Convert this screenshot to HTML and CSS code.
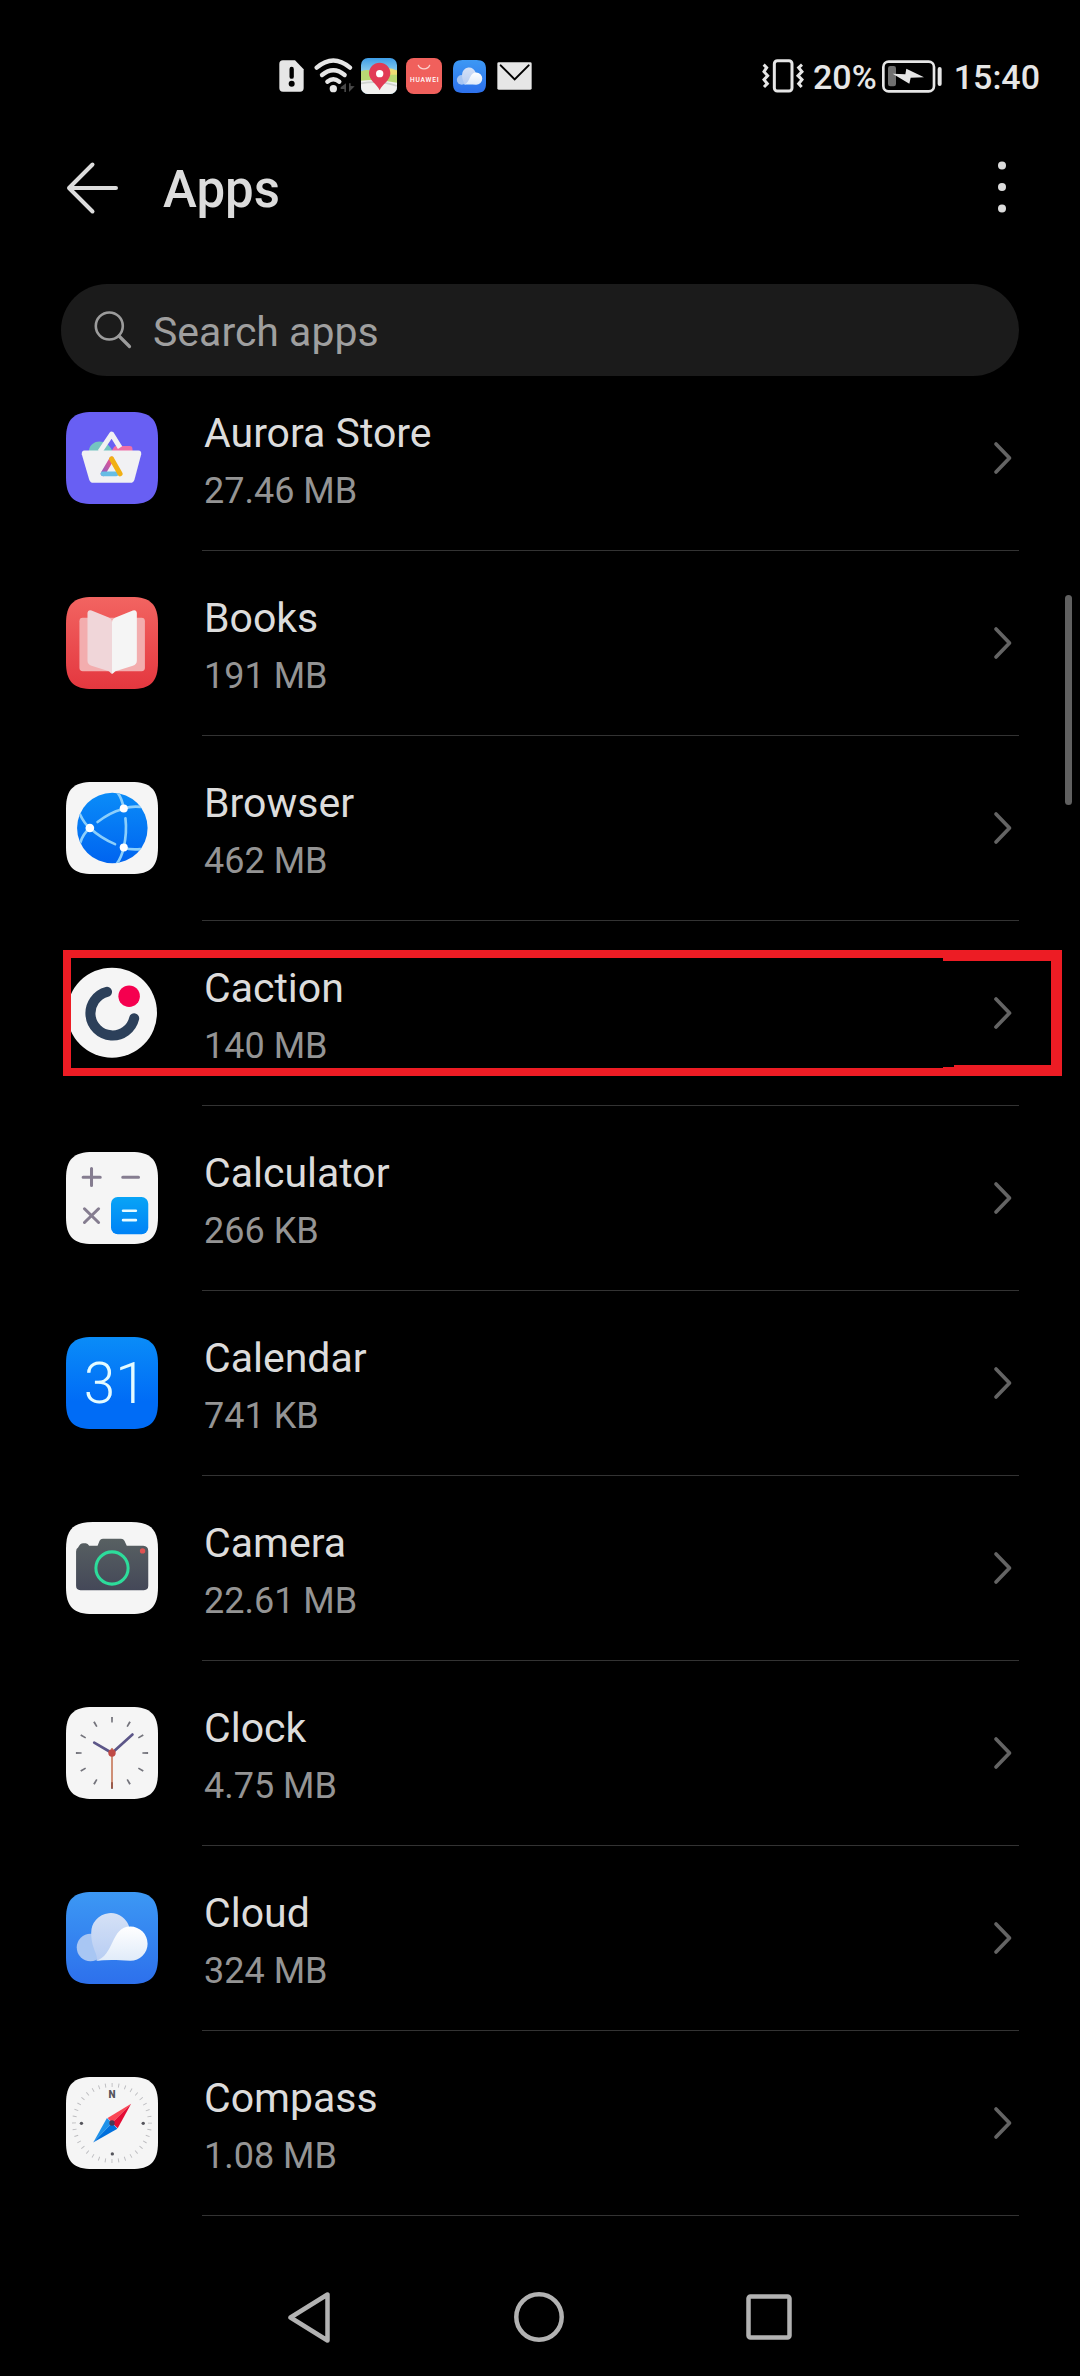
FILE: index.html
```html
<!DOCTYPE html>
<html lang="en">
<head>
<meta charset="utf-8">
<title>Apps</title>
<link rel="stylesheet" href="styles.css">
</head>
<body>
<svg class="defs" width="0" height="0" aria-hidden="true">
  <defs>
    <path id="tile" d="M0 137V80C0 22 22 0 80 0H194C252 0 274 22 274 80V194C274 252 252 274 194 274H80C22 274 0 252 0 194Z"/>
    <linearGradient id="gRed" x1="0" y1="0" x2="0" y2="1"><stop offset="0" stop-color="#f26461"/><stop offset="1" stop-color="#e4373f"/></linearGradient>
    <linearGradient id="gBlue" x1="0" y1="0" x2="0" y2="1"><stop offset="0" stop-color="#0a8cf8"/><stop offset=".7" stop-color="#006cf6"/><stop offset="1" stop-color="#006cf6"/></linearGradient>
    <linearGradient id="gGlobe" x1="0" y1="0" x2="0" y2="1"><stop offset="0" stop-color="#0a8cf8"/><stop offset="1" stop-color="#0064f0"/></linearGradient>
    <linearGradient id="gCyan" x1="0" y1="0" x2="0" y2="1"><stop offset="0" stop-color="#08a4f6"/><stop offset="1" stop-color="#0082f6"/></linearGradient>
    <linearGradient id="gSky" x1="0" y1="0" x2="0" y2="1"><stop offset="0" stop-color="#3c98f4"/><stop offset="1" stop-color="#2d70ec"/></linearGradient>
    <linearGradient id="gCam" x1="0" y1="0" x2="0" y2="1"><stop offset="0" stop-color="#586062"/><stop offset="1" stop-color="#444858"/></linearGradient>
    <linearGradient id="gPuff" x1="0" y1="0" x2="0" y2="1"><stop offset="0" stop-color="#fff"/><stop offset="1" stop-color="#e0ebf9"/></linearGradient>
    <linearGradient id="gMid" x1="0" y1="0" x2="0" y2="1"><stop offset="0" stop-color="#d5e1f6"/><stop offset="1" stop-color="#b7cdf3"/></linearGradient>
    <linearGradient id="gMap" x1="0" y1="0" x2="0" y2="1"><stop offset="0" stop-color="#3e9ee8"/><stop offset=".4" stop-color="#8fd0ee"/></linearGradient>
    <linearGradient id="gPink" x1="1" y1="0" x2="0" y2="1"><stop offset="0" stop-color="#f0508c"/><stop offset="1" stop-color="#9060c0"/></linearGradient>
    <symbol id="chevron" viewBox="0 0 20 34"><path d="M3 3L16.500 17L3 31" fill="none" stroke="#646464" stroke-width="3.700" stroke-linecap="round" stroke-linejoin="round"/></symbol>
    <symbol id="cloud" viewBox="0 0 274 274">
      <use href="#tile" fill="url(#gSky)"/>
      <circle cx="73" cy="165" r="41" fill="#a8c6f3"/>
      <path d="M92 204C96 185 75 168 75 122A58 58 0 0 1 190 110C150 118 150 204 92 204Z" fill="url(#gMid)"/>
      <path d="M88 205C145 192 132 103 192 103A51 51 0 0 1 192 205C150 202 120 202 88 205Z" fill="url(#gPuff)"/>
    </symbol>
  </defs>
</svg>

<header class="status">
  <div class="status-left">
    <svg class="s-sim" width="25" height="32" viewBox="0 0 75 96"><path d="M12 1H48L74 28V84Q74 95 63 95H12Q1 95 1 84V12Q1 1 12 1Z" fill="#e6e6e6"/><path d="M38 27V50" stroke="#000" stroke-width="13" stroke-linecap="round"/><circle cx="38" cy="71" r="9" fill="#000"/></svg>
    <svg class="s-wifi" width="42" height="36" viewBox="0 0 126 108"><g fill="none" stroke="#e6e6e6" stroke-width="13" stroke-linecap="round"><path d="M8 29Q58 -14 108 29"/><path d="M24 51Q58 22 92 51"/><path d="M40 71Q58 57 76 71"/></g><circle cx="58" cy="92" r="11" fill="#e6e6e6"/><path d="M96 76V102H91V93H80V88Z" fill="#484848"/><path d="M105 76V102L122 85L110 84V76Z" fill="#484848"/></svg>
    <svg class="s-map" width="36" height="36" viewBox="0 0 108 108"><clipPath id="mapClip"><rect width="108" height="108" rx="21"/></clipPath><g clip-path="url(#mapClip)"><rect width="108" height="108" fill="url(#gMap)"/><path d="M0 40Q25 30 45 45L108 36V75L0 80Z" fill="#b9d873"/><path d="M60 34Q84 24 108 38V50L60 50Z" fill="#eedc74"/><path d="M0 68Q50 62 108 74V108H0Z" fill="#f1f1ef"/><path d="M0 76Q60 66 108 84" stroke="#cfd2cf" stroke-width="5" fill="none"/></g><path d="M56 97C48 78 24 68 24 46A32 32 0 0 1 88 46C88 68 64 78 56 97Z" fill="#e23b55"/><circle cx="56" cy="47" r="11" fill="#fff"/></svg>
    <svg class="s-store" width="36" height="36" viewBox="0 0 108 108"><rect width="108" height="108" rx="23" fill="#f0605c"/><path d="M37 22A18 16 0 0 0 71 22" fill="none" stroke="#fbd0cd" stroke-width="4" stroke-linecap="round"/><text class="s-brand" x="12" y="71" textLength="86">HUAWEI</text></svg>
    <svg class="s-cloud" width="33" height="33"><use href="#cloud"/></svg>
    <svg class="s-mail" width="35" height="28" viewBox="0 0 105 84"><rect x="1" y="1" width="103" height="82" rx="4" fill="#e6e6e6"/><path d="M11 10L53 52L95 10" fill="none" stroke="#000" stroke-width="6" stroke-linecap="round"/></svg>
  </div>
  <div class="status-right">
    <svg class="s-vib" width="42" height="34" viewBox="0 0 126 102"><rect x="37" y="5" width="53" height="91" rx="9" fill="none" stroke="#e6e6e6" stroke-width="9"/><path d="M5 17L14 26L6 38L17 50L6 62L16 74L6 84M120 17L110 26L120 38L108 50L120 62L110 74L119 84" fill="none" stroke="#e6e6e6" stroke-width="9"/></svg>
    <span class="s-pct">20%</span>
    <svg class="s-bat" width="61" height="33" viewBox="0 0 183 99"><rect x="4" y="5" width="152" height="89" rx="16" fill="none" stroke="#e6e6e6" stroke-width="8"/><rect x="18" y="18" width="24" height="61" rx="7" fill="#707070"/><path d="M32 41L70 43L73 26L126 52L86 53L82 71Z" fill="#e6e6e6"/><path d="M173 27V72" stroke="#e6e6e6" stroke-width="12" stroke-linecap="round"/></svg>
    <span class="s-time">15:40</span>
  </div>
</header>

<div class="titlebar">
  <svg class="back" width="54" height="54" viewBox="0 0 54 54"><path d="M27.500 3.500L4 27L27.500 50.500M4 27H51" fill="none" stroke="#dcdcdc" stroke-width="4" stroke-linecap="round" stroke-linejoin="round"/></svg>
  <h1 class="title">Apps</h1>
  <svg class="more" width="8" height="52" viewBox="0 0 8 52"><g fill="#dcdcdc"><circle cx="4" cy="4.500" r="4"/><circle cx="4" cy="26" r="4"/><circle cx="4" cy="47.500" r="4"/></g></svg>
</div>

<div class="search">
  <svg width="38" height="38" viewBox="0 0 38 38"><g fill="none" stroke="#9c9c9c" stroke-width="2.600" stroke-linecap="round"><circle cx="15.300" cy="15" r="13.500"/><path d="M25 25L35.500 35.500" stroke-width="3.200"/></g></svg>
  <span class="search-text">Search apps</span>
</div>

<main class="list">
  <div class="row">
    <svg class="icon" viewBox="0 0 274 274"><use href="#tile" fill="#685ff3"/><path d="M68 116C72 82 120 76 138 116Z" fill="#74c4c0"/><path d="M136 116L143 104Q145 101 150 101H190Q198 101 198 110V116Z" fill="#ee6fa8"/><path d="M101 118L136 66L161 106" fill="none" stroke="#f1f1f3" stroke-width="15" stroke-linejoin="round"/><path d="M55 115H216Q225 116 224 126L204 201Q201 211 192 211H81Q72 211 69 201L47 126Q46 116 55 115Z" fill="#f1f1f3"/><path d="M110 184L136 140" stroke="url(#gPink)" stroke-width="14" stroke-linecap="round"/><path d="M110 184H150" stroke="#67bde5" stroke-width="14" stroke-linecap="round"/><path d="M136 140L161 184" stroke="#f1b014" stroke-width="15" stroke-linecap="round"/></svg>
    <div class="info"><div class="name">Aurora Store</div><div class="size">27.46 MB</div></div>
    <svg class="chev"><use href="#chevron"/></svg>
  </div>
  <div class="row">
    <svg class="icon" viewBox="0 0 274 274"><use href="#tile" fill="url(#gRed)"/><rect x="40" y="62" width="195" height="159" rx="10" fill="#f3adae"/><path d="M64 48Q65 37 76 40L122 59Q137 64 137 75V229Q134 227 128 221L76 205Q64 201 64 190Z" fill="#f0d6d9"/><path d="M211 48Q210 37 199 40L153 59Q137 64 137 75V229Q141 227 147 221L199 205Q211 201 211 190Z" fill="#f5f5f5"/></svg>
    <div class="info"><div class="name">Books</div><div class="size">191 MB</div></div>
    <svg class="chev"><use href="#chevron"/></svg>
  </div>
  <div class="row">
    <svg class="icon" viewBox="0 0 274 274"><use href="#tile" fill="#f5f5f5"/><clipPath id="globeClip"><circle cx="138" cy="137" r="105"/></clipPath><circle cx="138" cy="137" r="105" fill="url(#gGlobe)"/><g clip-path="url(#globeClip)" fill="none" stroke="#8ccffb" stroke-width="8" stroke-linecap="round"><path d="M154 32Q167 50 172 79Q195 71 222 74"/><path d="M165 82Q133 90 94 119"/><path d="M40 93Q55 125 71 137Q50 155 43 180"/><path d="M71 137Q105 168 146 185"/><path d="M177 108Q182 150 172 195Q190 203 222 200"/><path d="M172 195Q165 225 152 242"/></g><g fill="#fff"><circle cx="172" cy="79" r="12"/><circle cx="71" cy="137" r="13"/><circle cx="172" cy="195" r="12"/></g></svg>
    <div class="info"><div class="name">Browser</div><div class="size">462 MB</div></div>
    <svg class="chev"><use href="#chevron"/></svg>
  </div>
  <div class="row">
    <svg class="icon" viewBox="0 0 274 274"><circle cx="137" cy="136" r="134" fill="#f5f5f5"/><path d="M122 74A66 66 0 1 0 203 153" fill="none" stroke="#2c405a" stroke-width="30" stroke-linecap="round"/><circle cx="188" cy="87" r="32" fill="#f5004f"/></svg>
    <div class="info"><div class="name">Caction</div><div class="size">140 MB</div></div>
    <svg class="chev"><use href="#chevron"/></svg>
    <svg class="highlight" viewBox="0 0 999 126"><path fill="#ed1c24" fill-rule="evenodd" d="M0 0H999V126H0ZM8 8V118H880V117H891V115H988V11H880V8Z"/></svg>
  </div>
  <div class="row">
    <svg class="icon" viewBox="0 0 274 274"><use href="#tile" fill="#f5f5f5"/><g stroke="#857d90" stroke-width="9" stroke-linecap="round"><path d="M51 75H102M76 49V100M169 75H216M55 169L97 210M97 169L55 210"/></g><rect x="134" y="134" width="111" height="111" rx="20" fill="url(#gCyan)"/><path d="M170 175H208M170 203H208" stroke="#e8fbff" stroke-width="8" stroke-linecap="round"/></svg>
    <div class="info"><div class="name">Calculator</div><div class="size">266 KB</div></div>
    <svg class="chev"><use href="#chevron"/></svg>
  </div>
  <div class="row">
    <svg class="icon" viewBox="0 0 274 274"><use href="#tile" fill="url(#gBlue)"/><text class="date" x="53" y="196">31</text></svg>
    <div class="info"><div class="name">Calendar</div><div class="size">741 KB</div></div>
    <svg class="chev"><use href="#chevron"/></svg>
  </div>
  <div class="row">
    <svg class="icon" viewBox="0 0 274 274"><use href="#tile" fill="#f5f5f5"/><path d="M30 88Q30 79 36 76Q42 63 51 63H59Q65 63 69 71H94L100 56Q103 50 110 50H164Q171 50 174 56L181 71H230Q245 72 245 86V190Q245 203 232 203H43Q30 203 30 190Z" fill="url(#gCam)"/><circle cx="137" cy="137" r="48" fill="none" stroke="#2ddc9b" stroke-width="9"/><circle cx="228" cy="86" r="8" fill="#e05252"/></svg>
    <div class="info"><div class="name">Camera</div><div class="size">22.61 MB</div></div>
    <svg class="chev"><use href="#chevron"/></svg>
  </div>
  <div class="row">
    <svg class="icon" viewBox="0 0 274 274"><use href="#tile" fill="#f5f5f5"/><circle cx="137" cy="137" r="99" fill="none" stroke="#74747c" stroke-width="17" pathLength="360" stroke-dasharray="3 27" stroke-dashoffset="1.500"/><g stroke="#5c5688" stroke-width="8" stroke-linecap="round"><path d="M137 137L84 106M137 137L198 82"/></g><path d="M137 122V242" stroke="#cf8f76" stroke-width="6"/><path d="M137 224V242" stroke="#9a5a4a" stroke-width="6"/><circle cx="137" cy="137" r="11" fill="#bf4a46"/></svg>
    <div class="info"><div class="name">Clock</div><div class="size">4.75 MB</div></div>
    <svg class="chev"><use href="#chevron"/></svg>
  </div>
  <div class="row">
    <svg class="icon"><use href="#cloud"/></svg>
    <div class="info"><div class="name">Cloud</div><div class="size">324 MB</div></div>
    <svg class="chev"><use href="#chevron"/></svg>
  </div>
  <div class="row">
    <svg class="icon" viewBox="0 0 274 274"><use href="#tile" fill="#f5f5f5"/><circle cx="137" cy="137" r="113" fill="none" stroke="#bdbdc0" stroke-width="12" pathLength="360" stroke-dasharray="1.400 8.600" stroke-dashoffset=".7"/><text class="north" x="137" y="62" text-anchor="middle">N</text><g fill="#55555c"><circle cx="46" cy="138" r="5"/><circle cx="230" cy="138" r="5"/><circle cx="138" cy="229" r="5"/></g><path d="M194 80L124 122L137 137Z" fill="#fb4654"/><path d="M194 80L154 153L137 137Z" fill="#e40c34"/><path d="M81 195L122 122L137 137Z" fill="#1e92ea"/><path d="M81 195L153 154L137 137Z" fill="#0070dc"/><circle cx="137" cy="137" r="8" fill="#4a3a58"/></svg>
    <div class="info"><div class="name">Compass</div><div class="size">1.08 MB</div></div>
    <svg class="chev"><use href="#chevron"/></svg>
  </div>
</main>

<nav class="navbar">
  <svg width="43" height="51" viewBox="0 0 43 51"><path d="M39.500 2.500V48.500L2.500 25.500Z" fill="none" stroke="#b2b2b2" stroke-width="4.500" stroke-linejoin="round"/></svg>
  <svg width="50" height="50" viewBox="0 0 50 50"><circle cx="25" cy="25" r="22.700" fill="none" stroke="#b2b2b2" stroke-width="4.500"/></svg>
  <svg width="46" height="46" viewBox="0 0 46 46"><rect x="2.500" y="2.500" width="41" height="41" rx="2" fill="none" stroke="#b2b2b2" stroke-width="4.500"/></svg>
</nav>
<div class="scrollbar"></div>
</body>
</html>
```
FILE: styles.css
```css
* { box-sizing: border-box; }

body {
  margin: 0;
  width: 1080px;
  height: 2376px;
  position: relative;
  display: flex;
  flex-direction: column;
  overflow: hidden;
  background: #000;
  color: #dcdcdc;
  font-family: Roboto, sans-serif;
}

svg { display: block; flex: none; }
.defs { position: absolute; }

.status {
  height: 144px;
  padding: 8px 40px 0 279px;
  display: flex;
  justify-content: space-between;
  color: #e6e6e6;
  font-size: 34px;
  font-weight: 500;
}
.status-left, .status-right { display: flex; align-items: center; height: 136px; }
.s-wifi { margin-left: 10px; }
.s-map { margin-left: 5px; }
.s-store { margin-left: 9px; }
.s-cloud { margin-left: 11px; }
.s-mail { margin-left: 11px; }
.s-pct { margin: 1px 5px 0 9px; }
.s-time { margin: 1px 0 0 11px; }
.s-brand { font-size: 20px; font-weight: 500; fill: #fff; }

.titlebar {
  height: 140px;
  padding: 0 74px 50px 65px;
  display: flex;
  align-items: center;
}
.back { margin-bottom: 3px; }
.more { margin-bottom: 5px; }
.title { margin: 1px auto 0 44px; font-size: 51px; font-weight: 500; line-height: 90px; }

.search {
  height: 92px;
  margin: 0 61px;
  padding-left: 33px;
  display: flex;
  align-items: center;
  gap: 21px;
  border-radius: 46px;
  background: #1b1b1b;
  color: #9f9f9f;
  font-size: 41px;
}
.search-text { padding-top: 3px; }

.list { margin-top: -10px; padding-left: 66px; }
.row {
  position: relative;
  height: 185px;
  display: flex;
  align-items: center;
}
.icon { width: 92px; height: 92px; margin: 0 44px 2px 0; }
.info {
  width: 817px;
  height: 185px;
  padding: 39px 0 0 2px;
  border-bottom: 1px solid #333;
}
.name { height: 58px; font-size: 41px; line-height: 57px; }
.size { height: 57px; font-size: 36px; line-height: 57px; color: #949494; }
.chev { width: 20px; height: 34px; margin: 0 0 2px -26px; }
.highlight { position: absolute; left: -3px; top: 29px; width: 999px; height: 126px; }
.date { font-size: 169px; font-weight: 300; fill: #e4fbff; }
.north { font-size: 30px; font-weight: 900; fill: #55555c; }

.navbar {
  flex: 1;
  margin: 0 288px;
  padding-top: 42px;
  display: flex;
  align-items: center;
  justify-content: space-between;
}

.scrollbar {
  position: absolute;
  left: 1065px;
  top: 595px;
  width: 7px;
  height: 210px;
  border-radius: 4px;
  background: #606060;
}
```
